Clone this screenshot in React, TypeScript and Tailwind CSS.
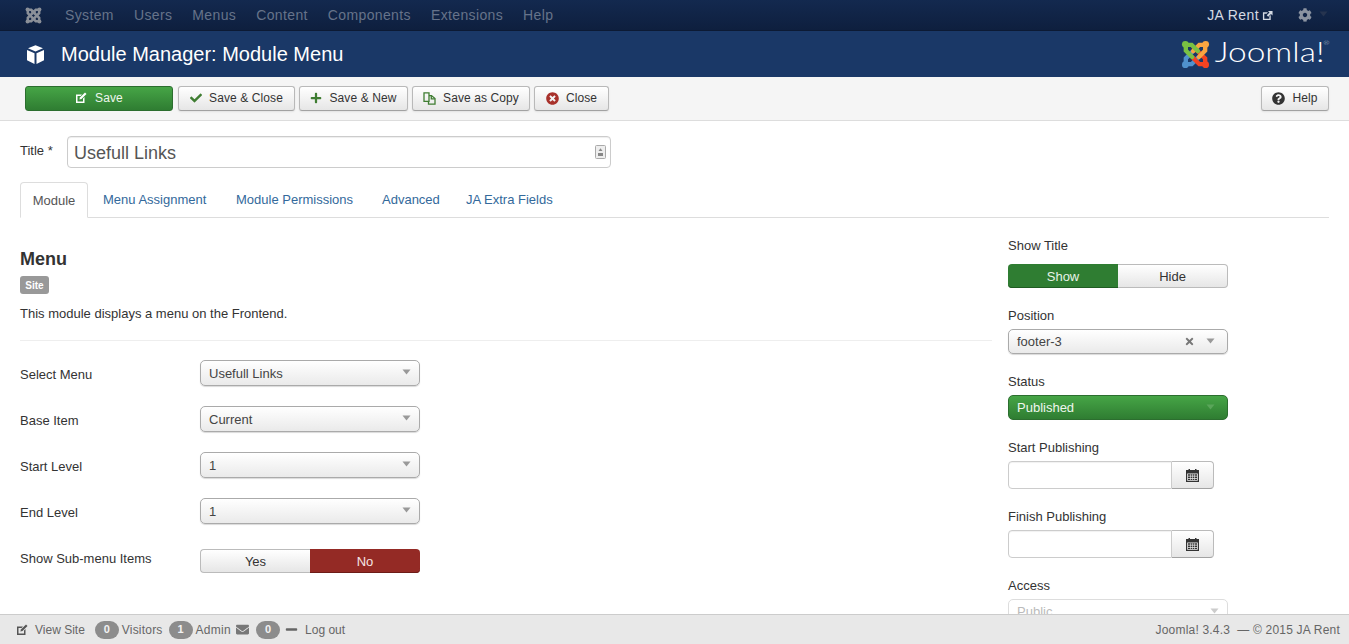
import { ReactNode } from "react";
import { FaCheck, FaPlus, FaTimes, FaTimesCircle, FaQuestionCircle, FaCog, FaEnvelope, FaMinus } from "react-icons/fa";

const navItems = ["System", "Users", "Menus", "Content", "Components", "Extensions", "Help"];
const tabs = [
  { label: "Menu Assignment", width: "w-[105px]" },
  { label: "Module Permissions", width: "w-[118px]" },
  { label: "Advanced", width: "w-[56px]" },
  { label: "JA Extra Fields", width: "w-[90px]" },
];

function Caret({ className = "text-[#999]" }: { className?: string }) {
  return (
    <svg width="9" height="6" viewBox="0 0 9 6" className={"mb-[2px] " + className}>
      <path d="M0.5 0.5h8L4.5 5.5z" fill="currentColor" />
    </svg>
  );
}

// square with a pencil, used by Save and View Site
function EditIcon({ className }: { className?: string }) {
  return (
    <svg width="12" height="12" viewBox="0 0 12 12" className={className}>
      <path d="M1 2.500h6L5.600 4H2.500v5.500H8V6.400L9.500 5v6H1z" fill="currentColor" />
      <path d="M10 .6l1.500 1.500-5 5L4.400 7.600 4.900 5.600z" fill="currentColor" />
    </svg>
  );
}

function ExternalIcon({ className }: { className?: string }) {
  return (
    <svg width="11" height="11" viewBox="0 0 12 12" className={className}>
      <path d="M1 2.500h5.500L5 4H2.500v5.500H8V7l1.500-1.500V11H1z" fill="currentColor" />
      <path d="M6.500 1H11.500V6L9.800 4.300 6.800 7.300 5.200 5.700 8.200 2.700z" fill="currentColor" />
    </svg>
  );
}

function CopyIcon() {
  return (
    <svg width="13" height="13" viewBox="0 0 13 13" className="text-[#3f7d32]" fill="none" stroke="currentColor" strokeWidth="1.300">
      <path d="M1 .9h5v8.500H1z" />
      <path d="M6 3.600h2.500L12 6.500v5.700H5.500V9.400" />
      <path d="M8.300 3.800v3h3.500" />
    </svg>
  );
}

function CalendarIcon() {
  return (
    <svg width="13" height="13" viewBox="0 0 13 13" className="text-[#333]">
      <path fillRule="evenodd" fill="currentColor" d="M0 1h2.500V0h1.500v1h5V0h1.500v1H13v12H0zM1.200 4.500v7.300h10.600V4.500z" />
      <path fill="currentColor" d="M2 5.300h9v1.400H2zM2 7.500h9v1.400H2zM2 9.700h9v1.400H2z" />
      <path fill="#e8e8e8" d="M4.200 5.300h.6v5.800h-.6zM6.200 5.300h.6v5.800h-.6zM8.200 5.300h.6v5.800h-.6z" />
    </svg>
  );
}

function CubeIcon() {
  return (
    <svg width="21" height="21" viewBox="0 0 21 21" className="text-white">
      <path fill="currentColor" d="M10.500 1.200 18 4.300 10.500 7.600 3 4.300z" />
      <path fill="currentColor" d="M2 6l7.500 3.300V20L2 16.300z" />
      <path fill="currentColor" d="M19 6l-7.500 3.300V20L19 16.300z" />
    </svg>
  );
}

function JoomlaMark({ size, colors }: { size: number; colors: string[] }) {
  const [green, orange, red, blue] = colors;
  return (
    <svg width={size} height={size} viewBox="0 0 30 30" fill="none" strokeWidth="4.500" strokeLinecap="round">
      <g stroke={blue}>
        <path d="M5 25 L5 19 L11.500 12.500" />
        <path d="M5 25 L11 25 L17.500 18.500" />
      </g>
      <g stroke={red}>
        <path d="M25 25 L25 19 L13 7.500" />
        <path d="M25 25 L19 25 L12.500 18.500" />
      </g>
      <g stroke={orange}>
        <path d="M25 5 L25 11 L18.500 17.500" />
        <path d="M25 5 L19 5 L12.500 11.500" />
      </g>
      <g stroke={green}>
        <path d="M5 5 L5 11 L11.500 17.500" />
        <path d="M5 5 L11 5 L17.500 11.500" />
      </g>
      <circle cx="4.500" cy="4.500" r="3.500" fill={green} />
      <circle cx="25.500" cy="4.500" r="3.500" fill={orange} />
      <circle cx="25.500" cy="25.500" r="3.500" fill={red} />
      <circle cx="4.500" cy="25.500" r="3.500" fill={blue} />
    </svg>
  );
}

function ToolButton({ children, className }: { children: ReactNode; className: string }) {
  return (
    <button
      className={
        "h-[25px] pb-px flex items-center justify-center gap-[7px] rounded-[3px] border border-[#b9b9b9] border-b-[#a2a2a2] bg-linear-to-b from-white to-[#e6e6e6] text-[12px] tracking-[0.1px] text-[#333] shadow-[0_1px_2px_rgba(0,0,0,0.08)] " +
        className
      }
    >
      {children}
    </button>
  );
}

function Select({ value }: { value: string }) {
  return (
    <div className="h-[26px] w-[220px] shrink-0 flex items-center justify-between pl-2 pr-[8px] rounded-[5px] border border-[#aaa] bg-linear-to-b from-white to-[#eaeaea] shadow-[0_1px_1px_rgba(0,0,0,0.15)] text-[13px] text-[#444]">
      <span className="pt-px">{value}</span>
      <Caret />
    </div>
  );
}

function Switcher({ left, right, on }: { left: string; right: string; on: "left" | "right" }) {
  const off = "bg-linear-to-b from-white to-[#e6e6e6] border border-[#bbb] text-[#333]";
  return (
    <div className="h-[24px] w-[220px] flex text-[13px]">
      <div className={"w-[110px] pt-px flex items-center justify-center rounded-l-[4px] " + (on === "left" ? "bg-[#2f7d32] text-[#e8f3e8] shadow-[inset_0_-1px_0_#1f5c22]" : off + " border-r-0")}>{left}</div>
      <div className={"w-[110px] pt-px flex items-center justify-center rounded-r-[4px] " + (on === "right" ? "bg-[#942a25] text-[#f6e6e6] shadow-[inset_0_-1px_0_#6d1c18]" : off + " border-l-0")}>{right}</div>
    </div>
  );
}

function FieldLabel({ children, className = "" }: { children: ReactNode; className?: string }) {
  return <div className={"h-[18px] text-[13px] leading-[20px] text-[#333] " + className}>{children}</div>;
}

function DateField() {
  return (
    <div className="h-[28px] w-[206px] flex">
      <div className="w-[164px] rounded-l-[4px] border border-[#ccc] bg-white shadow-[inset_0_1px_1px_rgba(0,0,0,0.06)]" />
      <div className="flex-1 flex items-center justify-center rounded-r-[4px] border border-l-0 border-[#bbb] border-b-[#a2a2a2] bg-linear-to-b from-white to-[#e6e6e6]">
        <CalendarIcon />
      </div>
    </div>
  );
}

function Badge({ n }: { n: number }) {
  return <span className="w-[24px] h-[18px] flex items-center justify-center rounded-full bg-[#8c8c8c] text-[11px] font-bold text-[#f2f2f2]">{n}</span>;
}

export default function App() {
  return (
    <div className="h-screen flex flex-col overflow-hidden bg-white font-['Liberation_Sans',Arial,sans-serif] text-[#333]">
      {/* top nav */}
      <nav className="h-[31px] shrink-0 flex items-center justify-between bg-linear-to-b from-[#13294f] to-[#0e1f3e] border-b border-[#0c1a34]">
        <div className="flex items-center">
          <div className="w-[65px] flex justify-center pl-[2px]">
            <JoomlaMark size={17} colors={["#8a8f98", "#8a8f98", "#8a8f98", "#8a8f98"]} />
          </div>
          <div className="flex items-center gap-[20px] text-[14px] tracking-[0.37px] text-[#66738a]">
            {navItems.map((item) => (
              <span key={item}>{item}</span>
            ))}
          </div>
        </div>
        <div className="flex items-center pr-[21px] text-[14px] tracking-[0.4px] text-[#d5dae3]">
          <span>JA Rent</span>
          <ExternalIcon className="ml-[3px] text-[#d5dae3]" />
          <FaCog className="ml-[25px] text-[#8b93a1] text-[14px]" />
          <Caret className="ml-[7px] text-[#26344f]" />
        </div>
      </nav>

      {/* title bar */}
      <header className="h-[46px] shrink-0 flex items-center justify-between bg-[#1a3867]">
        <div className="flex items-center pl-[25px] gap-[15px]">
          <CubeIcon />
          <h1 className="text-[20px] text-white">Module Manager: Module Menu</h1>
        </div>
        <div className="flex items-center pr-[25px] gap-[26px]">
          <JoomlaMark size={29} colors={["#7ac143", "#f9a541", "#f44321", "#5091cd"]} />
          <span className="relative mb-[5px] origin-right scale-x-[1.24] font-['Lato',sans-serif] font-light text-[27px] leading-none text-white">
            Joomla!
            <span className="absolute -right-[4px] top-[2px] text-[6px] text-[#cdd3dd]">®</span>
          </span>
        </div>
      </header>

      {/* toolbar */}
      <div className="h-[44px] shrink-0 flex items-center justify-between px-5 pl-[25px] bg-[#f5f5f5] border-b border-[#ddd]">
        <div className="flex items-center gap-[4px]">
          <button className="h-[25px] pb-px w-[148px] mr-[1px] flex items-center justify-center gap-[8px] rounded-[3px] border border-[#2c6e2f] bg-linear-to-b from-[#46a546] to-[#2f7d32] text-[12px] tracking-[0.1px] text-[#eef6ee]">
            <EditIcon className="text-white" />
            Save
          </button>
          <ToolButton className="w-[117px]">
            <FaCheck className="text-[#3f7d32] text-[12px]" />
            Save &amp; Close
          </ToolButton>
          <ToolButton className="w-[109px]">
            <FaPlus className="text-[#3f7d32] text-[12px]" />
            Save &amp; New
          </ToolButton>
          <ToolButton className="w-[118px]">
            <CopyIcon />
            Save as Copy
          </ToolButton>
          <ToolButton className="w-[75px]">
            <FaTimesCircle className="text-[#a8312b] text-[13px]" />
            Close
          </ToolButton>
        </div>
        <ToolButton className="w-[68px]">
          <FaQuestionCircle className="text-[#333] text-[13px]" />
          Help
        </ToolButton>
      </div>

      {/* form */}
      <main className="flex-1 min-h-0 overflow-hidden px-5 pt-[15px]">
        <div className="flex items-start">
          <label className="w-[47px] pt-[6px] text-[13px] leading-[18px]">Title *</label>
          <div className="w-[544px] h-[32px] flex items-center justify-between pl-[6px] pr-[4px] rounded-[4px] border border-[#ccc] bg-white shadow-[inset_0_1px_1px_rgba(0,0,0,0.07)]">
            <span className="pt-[2px] text-[18px] text-[#555]">Usefull Links</span>
            <svg width="11" height="14" viewBox="0 0 11 14" className="text-[#888]">
              <rect x="0.500" y="0.500" width="10" height="13" rx="1" fill="#eee" stroke="#aaa" />
              <path d="M5.500 3.200 7.500 6h-4z M3 8h5v3H3z" fill="currentColor" />
            </svg>
          </div>
        </div>

        <div className="mt-[14px] h-[36px] flex items-end border-b border-[#ddd] text-[13px]">
          <div className="relative -mb-px h-[36px] w-[68px] pt-px flex items-center justify-center rounded-t-[4px] border border-[#ddd] border-b-white bg-white text-[#555]">Module</div>
          <div className="h-[35px] pt-px flex items-center gap-[28px] pl-[15px] text-[#33699b]">
            {tabs.map((tab) => (
              <span key={tab.label} className={"whitespace-nowrap " + tab.width}>{tab.label}</span>
            ))}
          </div>
        </div>

        <div className="flex">
          {/* left column */}
          <section className="w-[972px] shrink-0">
            <h2 className="mt-[31px] text-[18px] leading-[20px] font-bold text-[#333]">Menu</h2>
            <span className="mt-[7px] w-[29px] h-[18px] flex items-center justify-center rounded-[3px] bg-[#999] text-[10px] font-bold text-white">Site</span>
            <p className="mt-[11px] text-[13px] leading-[18px]">This module displays a menu on the Frontend.</p>
            <hr className="mt-[17px] border-[#eee]" />

            <div className="mt-[19px] flex flex-col gap-[20px]">
              {[
                ["Select Menu", "Usefull Links"],
                ["Base Item", "Current"],
                ["Start Level", "1"],
                ["End Level", "1"],
              ].map(([label, value]) => (
                <div key={label} className="flex items-center">
                  <FieldLabel className="w-[180px] pt-px">{label}</FieldLabel>
                  <Select value={value} />
                </div>
              ))}
            </div>
            <div className="mt-[25px] flex">
              <FieldLabel className="w-[180px]">Show Sub-menu Items</FieldLabel>
              <Switcher left="Yes" right="No" on="right" />
            </div>
          </section>

          {/* right column */}
          <aside className="ml-[16px] w-[220px] pt-[18px]">
            <FieldLabel>Show Title</FieldLabel>
            <div className="mt-[10px]">
              <Switcher left="Show" right="Hide" on="left" />
            </div>
            <FieldLabel className="mt-[18px]">Position</FieldLabel>
            <div className="mt-[5px] h-[25px] flex items-center justify-between pl-2 pr-[12px] rounded-[5px] border border-[#aaa] bg-linear-to-b from-white to-[#eaeaea] shadow-[0_1px_1px_rgba(0,0,0,0.15)] text-[13px] text-[#444]">
              <span className="pt-px">footer-3</span>
              <span className="flex items-center gap-[11px]">
                <FaTimes className="text-[#777] text-[11px]" />
                <Caret />
              </span>
            </div>
            <FieldLabel className="mt-[18px]">Status</FieldLabel>
            <div className="mt-[5px] h-[25px] flex items-center justify-between pl-2 pr-[12px] rounded-[5px] border border-[#2c6e2f] bg-linear-to-b from-[#46a546] to-[#2f7d32] text-[13px] text-[#eef6ee]">
              <span className="pt-px">Published</span>
              <Caret className="text-[#5aa55a]" />
            </div>
            <FieldLabel className="mt-[18px]">Start Publishing</FieldLabel>
            <div className="mt-[5px]">
              <DateField />
            </div>
            <FieldLabel className="mt-[18px]">Finish Publishing</FieldLabel>
            <div className="mt-[5px]">
              <DateField />
            </div>
            <FieldLabel className="mt-[18px]">Access</FieldLabel>
            <div className="mt-[5px] h-[26px] flex items-center justify-between pl-2 pr-[8px] rounded-[5px] border border-[#ddd] text-[13px] text-[#bbb]">
              <span>Public</span>
              <Caret className="text-[#ccc]" />
            </div>
          </aside>
        </div>
      </main>

      {/* status bar */}
      <footer className="h-[30px] shrink-0 flex items-center justify-between pl-[16px] pr-[9px] bg-[#e8e8e8] border-t border-[#ccc] text-[12px] text-[#666]">
        <div className="flex items-center">
          <EditIcon className="text-[#555]" />
          <span className="ml-[7px]">View Site</span>
          <span className="ml-[10px]"><Badge n={0} /></span>
          <span className="ml-[3px] tracking-[0.2px]">Visitors</span>
          <span className="ml-[6px]"><Badge n={1} /></span>
          <span className="ml-[3px] tracking-[0.3px]">Admin</span>
          <FaEnvelope className="ml-[5px] text-[#777] text-[13px]" />
          <span className="ml-[7px]"><Badge n={0} /></span>
          <FaMinus className="ml-[5px] text-[#666] text-[13px]" />
          <span className="ml-[7px]">Log out</span>
        </div>
        <span className="tracking-[0.2px]">Joomla! 3.4.3 &nbsp;— © 2015 JA Rent</span>
      </footer>
    </div>
  );
}
